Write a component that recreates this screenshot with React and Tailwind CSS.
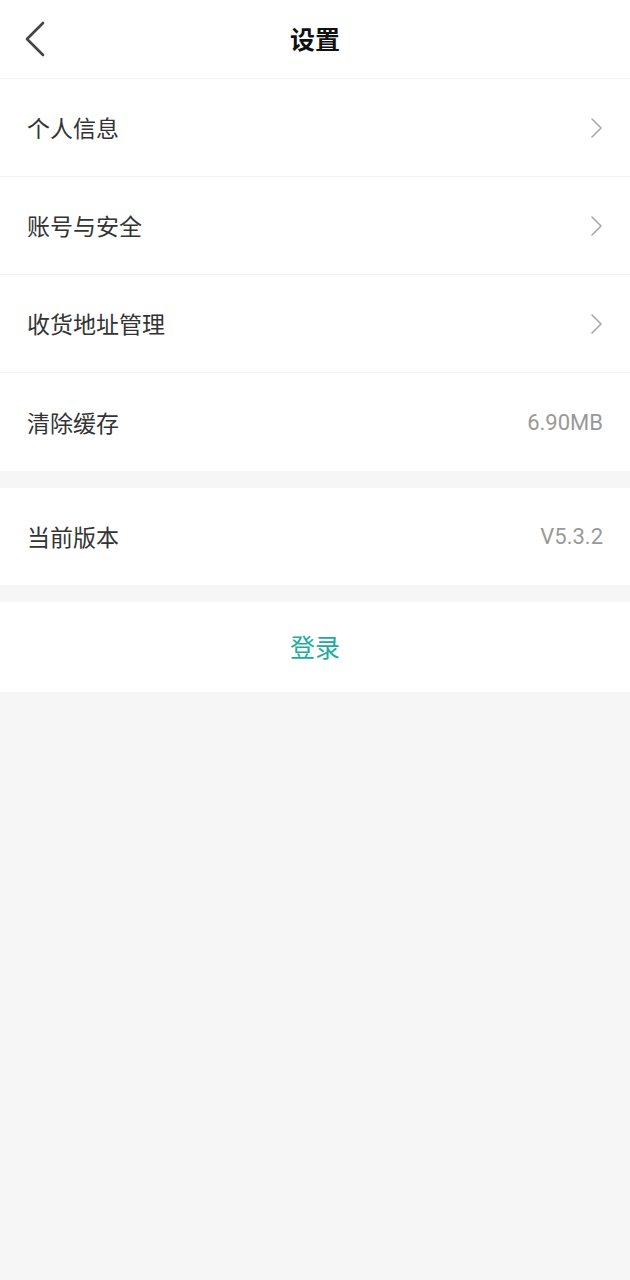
const font = { fontFamily: '"Noto Sans CJK SC", Roboto, "Noto Sans", sans-serif' };

const Chevron = () => (
  <svg width="14" height="22" viewBox="0 0 14 22" fill="none" className="shrink-0">
    <path d="M3 2l9 9-9 9" stroke="#a8a8a8" strokeWidth="1.6" strokeLinecap="round" strokeLinejoin="round" />
  </svg>
);

const Row = ({ label, value, arrow, last, h = 'h-[98px]' }) => (
  <div className={`${h} flex items-center justify-between px-[27px] bg-white ${last ? '' : 'border-b border-[#f2f2f2]'}`}>
    <span className="text-[23px] text-[#333333]">{label}</span>
    {arrow ? (
      <Chevron />
    ) : (
      <span className="text-[22px] text-[#999999] font-['Roboto',sans-serif]">{value}</span>
    )}
  </div>
);

export default function App() {
  return (
    <div className="min-h-[1280px] w-full bg-[#f6f6f6]" style={font}>
      {/* Header */}
      <div className="relative h-[79px] bg-white border-b border-[#f2f2f2] flex items-center justify-center">
        <svg width="24" height="36" viewBox="0 0 24 36" fill="none" className="absolute left-[23px] top-[21px]">
          <path d="M20 2L4 18l16 16" stroke="#444444" strokeWidth="2.6" strokeLinecap="round" strokeLinejoin="round" />
        </svg>
        <span className="text-[25px] font-bold text-[#111111]">设置</span>
      </div>

      <div>
        <Row label="个人信息" arrow />
        <Row label="账号与安全" arrow />
        <Row label="收货地址管理" arrow />
        <Row label="清除缓存" value="6.90MB" last />
      </div>

      <div className="mt-[17px]">
        <Row label="当前版本" value="V5.3.2" last h="h-[97px]" />
      </div>

      <div className="mt-[17px] h-[90px] bg-white flex items-center justify-center">
        <span className="text-[25px] text-[#22ab9c]">登录</span>
      </div>
    </div>
  );
}
